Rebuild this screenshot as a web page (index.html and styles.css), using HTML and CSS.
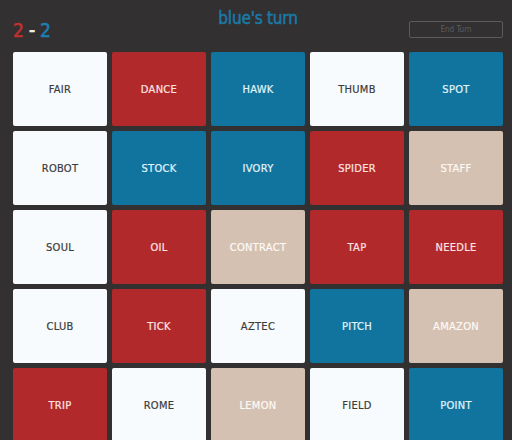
FILE: index.html
```html
<html>
    <head>
        <meta charset="UTF-8">
        <link rel="stylesheet" href="styles.css">
    </head>
    <body>
        <div id="juego">
            <div id="cabecera">
                <div class="marcador">
                    <span class="rojo">2</span>
                    <span class="guion">-</span>
                    <span class="azul">2</span>
                </div>
                <div class="turno">blue's turn</div>
                <div class="areaBoton">
                    <button id="terminar">End Turn</button>
                </div>
            </div>
            <div id="tablero">
                <div class="carta blanca">FAIR</div>
                <div class="carta roja">DANCE</div>
                <div class="carta azulc">HAWK</div>
                <div class="carta blanca">THUMB</div>
                <div class="carta azulc">SPOT</div>

                <div class="carta blanca">ROBOT</div>
                <div class="carta azulc">STOCK</div>
                <div class="carta azulc">IVORY</div>
                <div class="carta roja">SPIDER</div>
                <div class="carta neutra">STAFF</div>

                <div class="carta blanca">SOUL</div>
                <div class="carta roja">OIL</div>
                <div class="carta neutra">CONTRACT</div>
                <div class="carta roja">TAP</div>
                <div class="carta roja">NEEDLE</div>

                <div class="carta blanca">CLUB</div>
                <div class="carta roja">TICK</div>
                <div class="carta blanca">AZTEC</div>
                <div class="carta azulc">PITCH</div>
                <div class="carta neutra">AMAZON</div>

                <div class="carta roja">TRIP</div>
                <div class="carta blanca">ROME</div>
                <div class="carta neutra">LEMON</div>
                <div class="carta blanca">FIELD</div>
                <div class="carta azulc">POINT</div>
            </div>
        </div>
    </body>
</html>
```

FILE: styles.css
```css
body {
    margin: 0;
    background-color: #323031;
    font-family: "DejaVu Sans Condensed", "DejaVu Sans", sans-serif;
}
#juego {
    padding: 0 9px 0 13px;
}
#cabecera {
    display: grid;
    grid-template-columns: 1fr auto 1fr;
    height: 52px;
}
.marcador {
    display: flex;
    gap: 5px;
    padding-top: 19px;
    font-size: 19px;
    -webkit-text-stroke: 0.6px;
}
.rojo {
    color: #c03030;
}
.guion {
    color: #f0f0f0;
}
.azul {
    color: #1a80b0;
}
.turno {
    padding-top: 8px;
    font-size: 17px;
    letter-spacing: -0.2px;
    color: #1a7aa8;
    -webkit-text-stroke: 0.5px;
}
.areaBoton {
    display: flex;
    justify-content: flex-end;
    padding-top: 21px;
}
#terminar {
    width: 94px;
    height: 17px;
    padding: 0;
    background: transparent;
    border: 1px solid #5c5a5b;
    border-radius: 2px;
    color: #5e5c5d;
    font-family: "DejaVu Sans Condensed", "DejaVu Sans", sans-serif;
    font-size: 8px;
}
#tablero {
    display: grid;
    grid-template-columns: repeat(5, 94px);
    grid-auto-rows: 74px;
    gap: 5px;
}
.carta {
    display: flex;
    align-items: center;
    justify-content: center;
    border-radius: 2px;
    font-size: 11px;
    letter-spacing: 0.3px;
    -webkit-text-stroke: 0.2px;
}
.blanca {
    background-color: #f8fbfd;
    color: #3b3b3b;
}
.roja {
    background-color: #b2292b;
    color: #fbe4e4;
}
.azulc {
    background-color: #11749e;
    color: #e2f4fc;
}
.neutra {
    background-color: #d5c1b1;
    color: #fdfaf6;
}
```
